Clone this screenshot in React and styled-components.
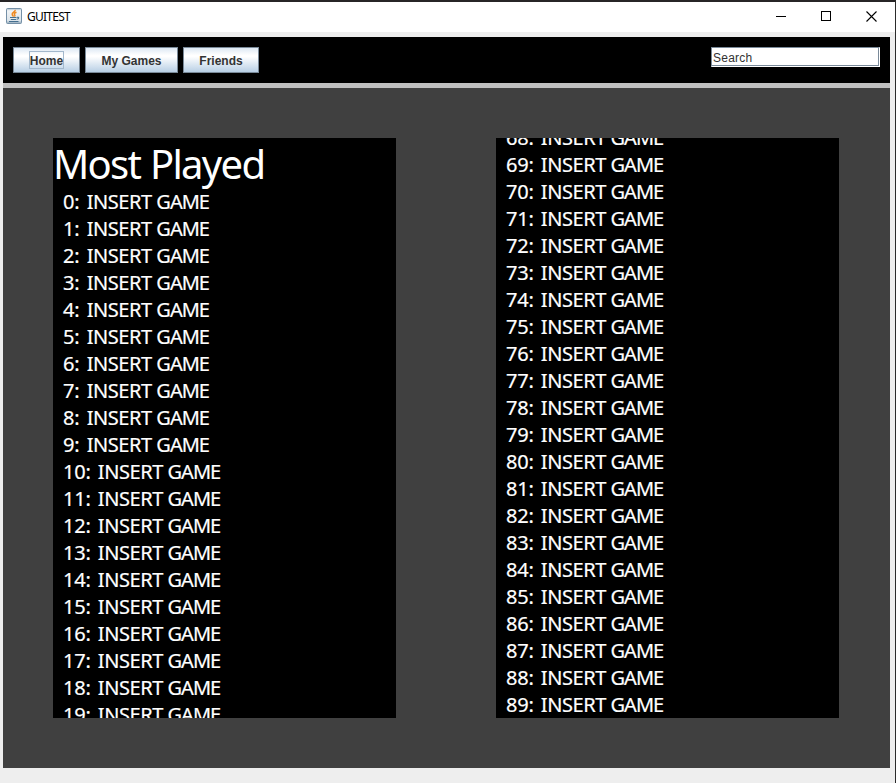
import React from 'react';
import styled, { createGlobalStyle } from 'styled-components';

const GlobalStyle = createGlobalStyle`
  * { box-sizing: border-box; }
  body { margin: 0; background: #eeeeee; overflow: hidden; }
`;

const Frame = styled.div`
  width: 896px;
  height: 783px;
  display: flex;
  flex-direction: column;
  background: #eeeeee;
  border-top: 2px solid #272526;
  border-right: 1px solid #2b2b2b;
`;

const TitleBar = styled.header`
  height: 30px;
  flex: none;
  display: flex;
  align-items: center;
  padding-left: 6px;
  background: #ffffff;
`;

const TitleIcon = styled.svg`
  flex: none;
  margin-top: -2px;
`;

const Title = styled.span`
  flex: 1;
  margin-left: 5px;
  font: 12px/16px "Noto Sans", sans-serif;
  letter-spacing: -0.75px;
  color: #000000;
`;

const WindowControls = styled.div`
  display: flex;
  padding-right: 1px;
`;

const WindowButton = styled.div`
  width: 45px;
  height: 28px;
  margin-bottom: 2px;
  display: flex;
  align-items: center;
  justify-content: center;
`;

const Content = styled.main`
  width: 887px;
  height: 731px;
  margin: 5px 0 0 3px;
  display: flex;
  flex-direction: column;
  background: #404040;
`;

const NavBar = styled.nav`
  height: 51px;
  flex: none;
  display: flex;
  align-items: flex-start;
  gap: 5px;
  padding: 10px 10px 0;
  background: #000000;
  border-bottom: 5px solid #c0c0c0;
`;

const NavButton = styled.div`
  width: ${(p) => p.$width}px;
  height: 26px;
  display: flex;
  align-items: center;
  justify-content: center;
  border: 1px solid #7a8a99;
  background: linear-gradient(#dde8f3 0%, #ffffff 30%, #ffffff 36%, #b8cfe5 100%);
  font: bold 12px/15px "Liberation Sans", Arial, sans-serif;
  color: #333333;
`;

const FocusLabel = styled.span`
  height: 18px;
  padding: 0 1px;
  line-height: 20px;
  outline: 1px solid ${(p) => (p.$focused ? '#a3b8cc' : 'transparent')};
  outline-offset: -1px;
`;

const SearchField = styled.div`
  width: 169px;
  height: 20px;
  margin-left: auto;
  padding-left: 1px;
  border: 1px solid;
  border-color: #7a8a99 #ffffff #ffffff #7a8a99;
  background: #ffffff;
  box-shadow: inset -1px -1px 0 #7a8a99;
  font: 12px/20px "Liberation Sans", Arial, sans-serif;
  letter-spacing: 0.25px;
  color: #333333;
`;

const Columns = styled.div`
  flex: 1;
  display: grid;
  grid-template-columns: 343px 343px;
  grid-template-rows: 580px;
  column-gap: 100px;
  padding: 50px;
`;

const GamePanel = styled.section`
  display: flex;
  flex-direction: column;
  overflow: hidden;
  background: #000000;
  color: #ffffff;
  font-family: "Noto Sans", sans-serif;
`;

const PanelTitle = styled.h1`
  height: 50px;
  flex: none;
  margin: 0;
  padding-top: 2px;
  font-size: 40px;
  font-weight: 400;
  line-height: 48px;
  letter-spacing: -1.7px;
  word-spacing: 1px;
  white-space: nowrap;
`;

const GameList = styled.div`
  margin-top: ${(p) => p.$offset}px;
  padding-left: 10px;
`;

const GameRow = styled.div`
  height: 27px;
  font-size: 20px;
  line-height: 27px;
  letter-spacing: -0.45px;
  white-space: nowrap;
  -webkit-text-stroke: 0.2px #ffffff;
`;

const Index = styled.span`
  letter-spacing: -0.2px;
  word-spacing: 2.2px;
`;

const TightWord = styled.span`
  letter-spacing: -1px;
`;

const range = (from, to) => Array.from({ length: to - from + 1 }, (_, i) => from + i);

const JavaIcon = () => (
  <TitleIcon width="16" height="16" viewBox="0 0 16 16" fill="none">
    <defs>
      <linearGradient id="tile" x1="0" y1="0" x2="0" y2="1">
        <stop offset="0" stopColor="#a9bccb" />
        <stop offset="0.15" stopColor="#f1f4f6" />
        <stop offset="0.8" stopColor="#dce4ea" />
        <stop offset="1" stopColor="#8ea6b8" />
      </linearGradient>
    </defs>
    <rect x="0.5" y="0.5" width="15" height="15" rx="1" fill="url(#tile)" stroke="#7590a7" />
    <path d="M9.2 1.8C9.6 3.8 5.6 4.5 6.2 6.4C6.5 7.4 7.2 7.6 7.4 8.6M10.5 4.2C8 5.1 7.8 6 8.7 6.8C9.3 7.5 8.8 8 8.4 8.6" stroke="#ee8a22" strokeWidth="1.5" />
    <path d="M4 9.5H10.5M4.8 11.5H10M3 13.5H12.5M11 9.4C13.4 8.7 13.2 11 10.6 11.3" stroke="#456f8f" strokeWidth="1.1" />
  </TitleIcon>
);

const MinimizeIcon = () => (
  <svg width="11" height="11" shapeRendering="crispEdges"><path d="M0 5.5H10" stroke="#000" /></svg>
);

const MaximizeIcon = () => (
  <svg width="11" height="11" shapeRendering="crispEdges"><rect x="0.5" y="0.5" width="9" height="9" fill="none" stroke="#000" /></svg>
);

const CloseIcon = () => (
  <svg width="11" height="11"><path d="M0.5 0.5L10.5 10.5M10.5 0.5L0.5 10.5" stroke="#000" strokeWidth="1.1" /></svg>
);

const navItems = [
  { label: 'Home', width: 67, focused: true },
  { label: 'My Games', width: 93 },
  { label: 'Friends', width: 76 },
];

const Games = ({ from, to, offset }) => (
  <GameList $offset={offset}>
    {range(from, to).map((n) => (
      <GameRow key={n}>
        <Index>{n}: </Index>INSERT <TightWord>GAME</TightWord>
      </GameRow>
    ))}
  </GameList>
);

export default function App() {
  return (
    <>
      <GlobalStyle />
      <Frame>
        <TitleBar>
          <JavaIcon />
          <Title>GUITEST</Title>
          <WindowControls>
            <WindowButton><MinimizeIcon /></WindowButton>
            <WindowButton><MaximizeIcon /></WindowButton>
            <WindowButton><CloseIcon /></WindowButton>
          </WindowControls>
        </TitleBar>
        <Content>
          <NavBar>
            {navItems.map(({ label, width, focused }) => (
              <NavButton key={label} $width={width}>
                <FocusLabel $focused={focused}>{label}</FocusLabel>
              </NavButton>
            ))}
            <SearchField>Search</SearchField>
          </NavBar>
          <Columns>
            <GamePanel>
              <PanelTitle>Most Played</PanelTitle>
              <Games from={0} to={19} offset={0} />
            </GamePanel>
            <GamePanel>
              <Games from={68} to={89} offset={-14} />
            </GamePanel>
          </Columns>
        </Content>
      </Frame>
    </>
  );
}
